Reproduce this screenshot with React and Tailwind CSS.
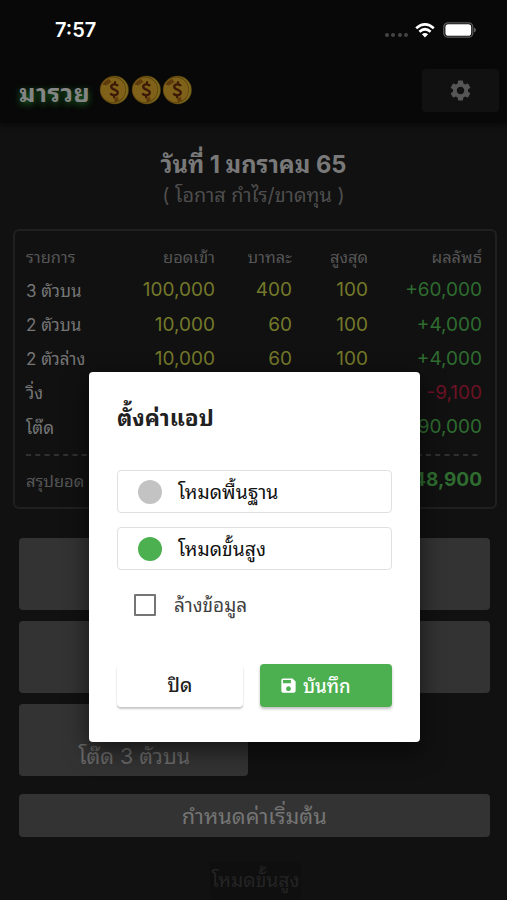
import { MdSave, MdSettings } from 'react-icons/md'

const rows = [
  { name: '3 ตัวบน', amount: '100,000', rate: '400', max: '100', result: '+60,000' },
  { name: '2 ตัวบน', amount: '10,000', rate: '60', max: '100', result: '+4,000' },
  { name: '2 ตัวล่าง', amount: '10,000', rate: '60', max: '100', result: '+4,000' },
  { name: 'วิ่ง', amount: '', rate: '', max: '', result: '-9,100', loss: true },
  { name: 'โต๊ด', amount: '', rate: '', max: '', result: '+90,000' }
]

const modes = [
  { label: 'โหมดพื้นฐาน', active: false },
  { label: 'โหมดขั้นสูง', active: true }
]

function Coin() {
  return (
    <svg viewBox="0 0 30 30" className="w-[30px] h-[30px]">
      <circle cx="15.6" cy="15" r="14.2" fill="#5a4710" />
      <circle cx="15.6" cy="15" r="13.4" fill="#806a1e" />
      <circle cx="14" cy="14.8" r="13.2" fill="#5c430d" />
      <circle cx="14" cy="14.8" r="12.4" fill="#80611a" />
      <path d="M3.5 9.5 Q6 5 10 4 L12.5 7 L7 10.5 Z M15 24 L19 21.5 L19.5 26 L16 27.2 Z" fill="#5e3a0c" />
      <path d="M18.8 11.2 C18 8.8 12.4 8.6 12.2 11.8 C12.2 15 19 14.4 18.8 17.8 C18.6 21 12.6 20.8 11.6 18.2" fill="none" stroke="#3c1a06" strokeWidth="2.4" />
      <path d="M16 6.2 V9.5 M15.2 20 V23.2" stroke="#3c1a06" strokeWidth="2.2" />
    </svg>
  )
}

function StatusBar() {
  return (
    <div className="flex h-[60px] items-center pl-[55px] pr-[31px] text-white">
      <span className="text-[20px] font-semibold leading-none">7:57</span>
      <div className="ml-auto flex items-center">
        <div className="mt-[10px] mr-[7px] flex gap-[2.5px]">
          {[0, 1, 2, 3].map(i => (
            <i key={i} className="h-1 w-1 rounded-full bg-[#444]" />
          ))}
        </div>
        <svg viewBox="0 0 20 15" className="mr-[8px] h-[15px] w-5">
          <g fill="none" stroke="#fff" strokeWidth="2.7">
            <path d="M1.2 5.2 Q10 -2.4 18.8 5.2" />
            <path d="M4.4 8.7 Q10 3.8 15.6 8.7" />
          </g>
          <path d="M6.9 11.2 Q10 8.6 13.1 11.2 L10 14.6 Z" fill="#fff" />
        </svg>
        <svg viewBox="0 0 33 16" className="h-4 w-[33px]">
          <rect x="0.8" y="0.8" width="29" height="14.4" rx="4.3" fill="none" stroke="#5c5c5c" strokeWidth="1.3" />
          <rect x="2.4" y="2.3" width="25.8" height="11.4" rx="2.8" fill="#fff" />
          <path d="M31 5.5 Q33 6.3 33 8 Q33 9.7 31 10.5 Z" fill="#5c5c5c" />
        </svg>
      </div>
    </div>
  )
}

function Header() {
  return (
    <header className="h-[123px] bg-[#080808] shadow-[0_2px_6px_#0a0a0a]">
      <StatusBar />
      <div className="flex h-[60px] items-center pl-[19px] pr-[8px]">
        <h1 className="mt-[6px] w-[80px] whitespace-nowrap text-[25px] font-bold leading-none tracking-[0.5px] text-[#858585] [text-shadow:0_2px_7px_#1c6b22]">มารวย</h1>
        <div className="flex gap-[1.5px]">
          <Coin />
          <Coin />
          <Coin />
        </div>
        <button className="ml-auto flex h-[43px] w-[77px] items-center justify-center rounded bg-[#111]">
          <MdSettings className="h-[25px] w-[25px] text-[#565656]" />
        </button>
      </div>
    </header>
  )
}

function SummaryTable() {
  return (
    <section className="ml-[12.5px] mt-[19px] h-[280px] w-[484px] rounded-md border-2 border-[#202020] px-[11.5px] pt-[9px]">
      <div className="grid h-[34px] grid-cols-[80px_109px_77px_76px_114px] items-center whitespace-nowrap text-right text-[16.5px] text-[#565656]">
        <span className="text-left">รายการ</span>
        <span>ยอดเข้า</span>
        <span>บาทละ</span>
        <span>สูงสุด</span>
        <span>ผลลัพธ์</span>
      </div>
      {rows.map(row => (
        <div key={row.name} className="grid h-[34.2px] grid-cols-[80px_109px_77px_76px_114px] items-center whitespace-nowrap pb-[1px] text-right text-[19px] text-[#74792a]">
          <span className="pt-[2px] text-left text-[17px] text-[#767676]">{row.name}</span>
          <span>{row.amount}</span>
          <span>{row.rate}</span>
          <span>{row.max}</span>
          <span className={row.loss ? 'text-[#6c1225]' : 'text-[#2e6c30]'}>{row.result}</span>
        </div>
      ))}
      <svg className="mt-[9px] h-[2px] w-[452px]">
        <path d="M0 1 H452" stroke="#3c3c3c" strokeWidth="1.5" strokeDasharray="5 4.3" />
      </svg>
      <div className="mt-[6px] flex h-[36px] w-[456px] items-center justify-between">
        <span className="pt-[2px] text-[16.5px] text-[#565656]">สรุปยอด</span>
        <span className="text-[19px] font-bold text-[#2e6c30]">+148,900</span>
      </div>
    </section>
  )
}

function Actions() {
  return (
    <section className="ml-[18.5px] mr-[17px] mt-[29px]">
      <div className="grid grid-cols-2 gap-x-[12px] gap-y-[11.5px]">
        {[0, 1, 2, 3].map(i => (
          <button key={i} className="h-[71.5px] rounded bg-[#333]" />
        ))}
        <button className="h-[71.5px] rounded bg-[#333] pl-[2px] pt-[33px] text-[21.5px] leading-none text-[#6a6a6a]">โต๊ด 3 ตัวบน</button>
      </div>
      <button className="mt-[18px] h-[43px] w-full rounded bg-[#333] pt-[3px] text-[21.7px] leading-none text-[#757575]">กำหนดค่าเริ่มต้น</button>
    </section>
  )
}

function SettingsDialog() {
  return (
    <div className="absolute left-[89px] top-[372px] h-[370px] w-[331px] rounded bg-white px-[28px] pt-[28px] shadow-[0_8px_24px_rgba(0,0,0,0.6)]">
      <h2 className="h-[70px] text-[22.6px] font-bold leading-[36px] text-[#212121]">ตั้งค่าแอป</h2>
      <div className="space-y-[14px]">
        {modes.map(mode => (
          <button key={mode.label} className="flex h-[43px] w-[275px] items-center rounded border border-[#e0e0e0] pl-[20px] text-[19.3px] text-[#111]">
            <i className={mode.active ? 'mr-[16px] h-6 w-6 rounded-full bg-[#4caf50]' : 'mr-[16px] h-6 w-6 rounded-full bg-[#c3c3c3]'} />
            <span className="pt-[1px]">{mode.label}</span>
          </button>
        ))}
      </div>
      <label className="mt-[15px] flex h-[40px] items-center pl-[17px] text-[19px] text-[#404040]">
        <i className="mr-[18px] h-[22px] w-[22px] rounded-[1px] border-2 border-[#757575]" />
        <span className="pt-[3px]">ล้างข้อมูล</span>
      </label>
      <div className="mt-[39px] flex gap-[17px]">
        <button className="h-[43px] w-[126px] rounded bg-white pt-[2px] text-[19px] font-medium text-[#212121] shadow-[0_2px_2px_rgba(0,0,0,0.22)]">ปิด</button>
        <button className="flex h-[43px] w-[132px] items-center rounded bg-[#4caf50] pl-[19px] text-[18.5px] font-medium text-white shadow-[0_2px_3px_rgba(0,0,0,0.25)]">
          <MdSave className="mr-[5px] h-[19px] w-[19px]" />
          <span className="pt-[2px]">บันทึก</span>
        </button>
      </div>
    </div>
  )
}

export default function App() {
  return (
    <div lang="th" className="relative h-[900px] w-[507px] overflow-hidden bg-[#111] font-['Inter','Thonburi','Noto_Sans_Thai_Looped','Loma','Waree','Garuda','Sarabun','Laksaman','Umpush',sans-serif]">
      <Header />
      <div className="mt-[26px] text-center">
        <h2 className="h-[32px] text-[23.7px] font-bold leading-[32px] text-[#797979]">วันที่ 1 มกราคม 65</h2>
        <p className="h-[29px] text-[19.8px] leading-[29px] text-[#4e4e4e]">( โอกาส กำไร/ขาดทุน )</p>
      </div>
      <SummaryTable />
      <Actions />
      <div className="ml-[210px] mt-[25px] flex h-[38px] w-[91px] items-center justify-center whitespace-nowrap bg-[#0f0f0f] text-[19.3px] text-[#242424]">โหมดขั้นสูง</div>
      <SettingsDialog />
    </div>
  )
}
